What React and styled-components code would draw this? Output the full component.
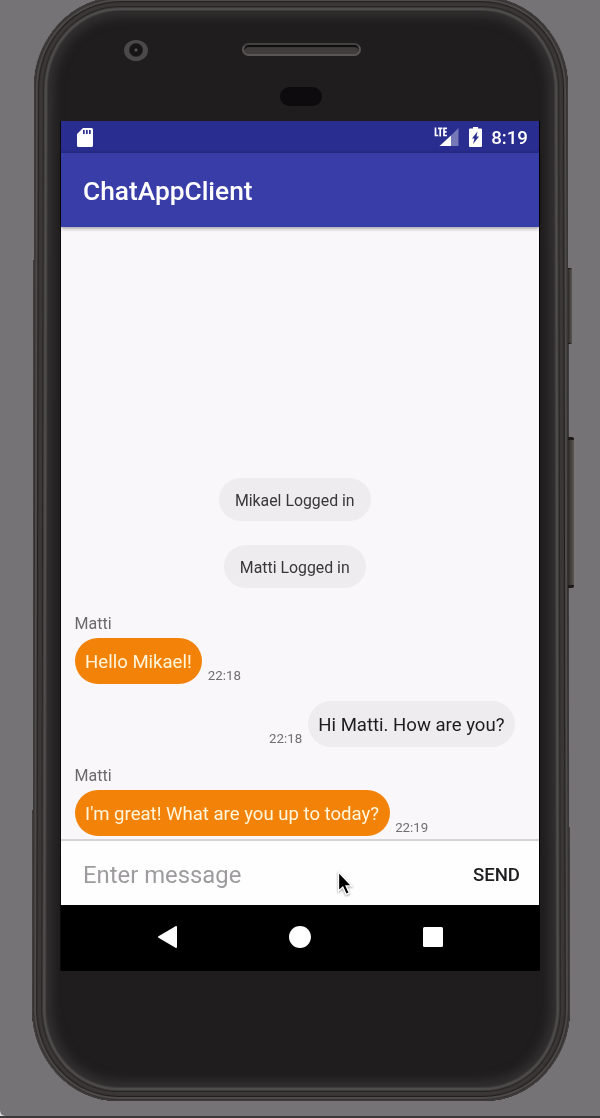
import React from 'react';
import styled, { createGlobalStyle } from 'styled-components';

const GlobalStyle = createGlobalStyle`
  * { box-sizing: border-box; }
  body { margin: 0; background: #757375; font-family: Roboto, sans-serif; }
`;

const Desktop = styled.div`
  position: relative;
  height: 1118px;
  overflow: hidden;
  background: #757375;
  border-bottom: 2px solid #3b393a;
`;

const WindowCorner = styled.svg`
  position: absolute;
  left: 0;
  bottom: 0;
`;

const Phone = styled.div`
  position: relative;
  width: 536px;
  height: 1102px;
  margin: -1px 0 0 33px;
  padding: 122px 0 0 28px;

  &::before {
    content: '';
    position: absolute;
    inset: -4px 0 2px;
    border-radius: 86px / 92px;
    background: #1f1d1e;
    transform: perspective(2000px) rotateX(0.78deg);
    box-shadow:
      inset 0 0 0 1px #3f3d3c,
      inset 0 0 0 2px #33302f,
      inset 0 0 0 4px #4d4b4a,
      inset 0 0 0 5px #211f1e,
      inset 0 0 0 6px #363331,
      inset 0 0 0 9px #3a3736,
      inset 0 0 0 10px #272424,
      inset 0 0 0 11px #3e3c3b,
      inset 0 0 0 13px #4f4d4c,
      inset 0 0 0 14px #3d3b3b,
      inset 0 0 11px 20px #333131;
  }
`;

const SideButton = styled.div`
  position: absolute;
  left: 535px;
  top: ${(p) => p.$top}px;
  width: ${(p) => p.$width}px;
  height: ${(p) => p.$height}px;
  border-radius: 0 2px 2px 0;
  background: linear-gradient(90deg, #2d2927, #494540 60%, #5a5754);
  border-top: ${(p) => p.$cap}px solid #1d1a19;
  border-bottom: ${(p) => p.$cap}px solid #1d1a19;
`;

const Camera = styled.div`
  position: absolute;
  left: 91px;
  top: 41px;
  width: 24px;
  height: 21px;
  border-radius: 50%;
  background: radial-gradient(circle at 12px 10px, #555 0 1px, #171516 2px 6px, #4b4949 7.5px);
`;

const Speaker = styled.div`
  position: absolute;
  left: 209px;
  top: 44px;
  width: 119px;
  height: 13px;
  border: 2px solid #595756;
  border-top-color: #454342;
  border-radius: 7px;
  background: #403d3c;
  box-shadow: inset 0 2px 1px #0d0b0c;
`;

const Sensor = styled.div`
  position: absolute;
  left: 247px;
  top: 88px;
  width: 42px;
  height: 19px;
  border-radius: 10px;
  background: #0d0b0e;
`;

const Screen = styled.div`
  position: relative;
  display: flex;
  flex-direction: column;
  width: 479px;
  height: 850px;
  border-right: 1px solid #000;
  background: #000;
  box-shadow: -1px 0 #0c0b0b;
`;

const StatusBar = styled.div`
  display: flex;
  align-items: center;
  height: 32px;
  flex: none;
  padding: 0 11px 0 16px;
  background: #292d8f;
  color: #fff;
`;

const Clock = styled.span`
  margin-left: 9px;
  font-size: 18.7px;
  font-weight: 500;
  line-height: 32px;
  padding-top: 1px;
`;

const StatusIcons = styled.div`
  display: flex;
  gap: 10px;
  margin-left: auto;
`;

const AppBar = styled.header`
  position: relative;
  z-index: 1;
  display: flex;
  align-items: center;
  height: 74px;
  flex: none;
  padding: 2px 22px 0;
  background: #393da8;
  box-shadow: 0 1px 4px rgba(0, 0, 0, 0.45);
`;

const Title = styled.h1`
  margin: 0;
  color: #fff;
  font-size: 26.3px;
  font-weight: 500;
  line-height: 32px;
`;

const Messages = styled.main`
  display: flex;
  flex: 1;
  flex-direction: column;
  justify-content: flex-end;
  padding: 0 24px 3px 13.5px;
  background: #f9f7fa;
`;

const Notice = styled.div`
  align-self: center;
  height: 43px;
  margin-bottom: 24px;
  padding: 0 16px;
  border-radius: 22px;
  background: #eeecee;
  color: #38373a;
  font-size: 15.85px;
  line-height: 45px;
`;

const Message = styled.div`
  display: flex;
  flex-direction: column;
  align-items: ${(p) => (p.$own ? 'flex-end' : 'flex-start')};
  margin-top: ${(p) => p.$gap}px;
`;

const Author = styled.div`
  height: 24px;
  color: #6b696c;
  font-size: 16px;
  line-height: 19px;
`;

const BubbleRow = styled.div`
  display: flex;
  flex-direction: ${(p) => (p.$own ? 'row-reverse' : 'row')};
  align-items: flex-end;
  gap: 5.5px;
`;

const Bubble = styled.div`
  height: 46px;
  padding: 0 10.6px;
  border-radius: 23px;
  background: ${(p) => (p.$own ? '#eeecee' : '#f38208')};
  color: ${(p) => (p.$own ? '#1d1c1e' : '#fff6dc')};
  font-size: 18.57px;
  line-height: 48px;
  white-space: nowrap;
`;

const Time = styled.span`
  color: #706e71;
  font-size: 13.3px;
  line-height: 16px;
`;

const Composer = styled.footer`
  display: flex;
  align-items: center;
  justify-content: space-between;
  height: 66px;
  flex: none;
  padding: 3px 19px 0 22px;
  border-top: 2px solid #d5d3d5;
  background: #fffeff;
`;

const Placeholder = styled.span`
  color: #9d9b9e;
  font-size: 23.85px;
`;

const Send = styled.span`
  color: #1d1c1e;
  font-size: 18.6px;
  font-weight: 500;
`;

const NavBar = styled.nav`
  display: flex;
  align-items: center;
  justify-content: space-between;
  height: 66px;
  flex: none;
  padding: 0 96px 2px 97px;
`;

const Pointer = styled.svg`
  position: absolute;
  left: 275px;
  top: 750px;
  overflow: visible;
  filter: drop-shadow(0 1px 1px rgba(0, 0, 0, 0.4));
`;

function SdCardIcon() {
  return (
    <svg width="16" height="19" viewBox="0 0 16 19">
      <path fill="#fff" fillRule="evenodd" d="M6 0h8.5Q16 0 16 1.5v16q0 1.5-1.5 1.5h-13Q0 19 0 17.5V6zM6 2v4h1.7V2zm3 0v4h1.7V2zm3 0v4h1.7V2z" />
    </svg>
  );
}

function SignalIcon() {
  return (
    <svg width="25" height="20" viewBox="0 0 25 20">
      <path fill="#7679b8" d="M24.5 1v18h-8V9z" />
      <path fill="#fff" d="M17 8.5V19H5.5z" />
      <path fill="none" stroke="#fff" strokeWidth="1.7" d="M1.5 .5v8h2.8M4 1.3h4.4M6.2 1v8.4M13 1.3H10v7.2h3M10 4.8h2.6" />
    </svg>
  );
}

function BatteryIcon() {
  return (
    <svg width="13" height="20" viewBox="0 0 13 20">
      <path fill="#fff" fillRule="evenodd" d="M4 0h5v1.5h3q1 0 1 1V19q0 1-1 1H1q-1 0-1-1V2.5q0-1 1-1h3zM8.500 4.500L3 11.500h2.500L4 17l6-7.500H7.500z" />
    </svg>
  );
}

const HISTORY = [
  { author: 'Matti', text: 'Hello Mikael!', time: '22:18', gap: 2 },
  { own: true, text: 'Hi Matti. How are you?', time: '22:18', gap: 17 },
  { author: 'Matti', text: "I'm great! What are you up to today?", time: '22:19', gap: 19 },
];

export default function App() {
  return (
    <Desktop>
      <GlobalStyle />
      <Phone>
        <SideButton $top={269} $width={4} $height={76} $cap={1} />
        <SideButton $top={438} $width={6} $height={151} $cap={3} />
        <Camera />
        <Speaker />
        <Sensor />
        <Screen>
          <StatusBar>
            <SdCardIcon />
            <StatusIcons>
              <SignalIcon />
              <BatteryIcon />
            </StatusIcons>
            <Clock>8:19</Clock>
          </StatusBar>
          <AppBar><Title>ChatAppClient</Title></AppBar>
          <Messages>
            <Notice>Mikael Logged in</Notice>
            <Notice>Matti Logged in</Notice>
            {HISTORY.map((m, i) => (
              <Message key={i} $own={m.own} $gap={m.gap}>
                {m.author && <Author>{m.author}</Author>}
                <BubbleRow $own={m.own}>
                  <Bubble $own={m.own}>{m.text}</Bubble>
                  <Time>{m.time}</Time>
                </BubbleRow>
              </Message>
            ))}
          </Messages>
          <Composer>
            <Placeholder>Enter message</Placeholder>
            <Send>SEND</Send>
          </Composer>
          <NavBar>
            <svg width="19" height="22" viewBox="0 0 19 22">
              <path fill="#fff" stroke="#fff" strokeWidth="2" strokeLinejoin="round" d="M18 1v20L1 11z" />
            </svg>
            <svg width="22" height="22" viewBox="0 0 22 22"><circle cx="11" cy="11" r="11" fill="#fff" /></svg>
            <svg width="20" height="20" viewBox="0 0 20 20"><rect width="20" height="20" rx="1.5" fill="#fff" /></svg>
          </NavBar>
          <Pointer width="16" height="25" viewBox="0 0 16 25">
            <path fill="#000" stroke="#fff" strokeWidth="1.3" d="M2.5 1v19l4.3-4 3.3 7.3 3.2-1.4-3.2-7h5.5z" />
          </Pointer>
        </Screen>
      </Phone>
      <WindowCorner width="5" height="6" viewBox="0 0 5 6"><path fill="#d8d8d8" d="M0 0q0 5 5 6H0z" /></WindowCorner>
    </Desktop>
  );
}
